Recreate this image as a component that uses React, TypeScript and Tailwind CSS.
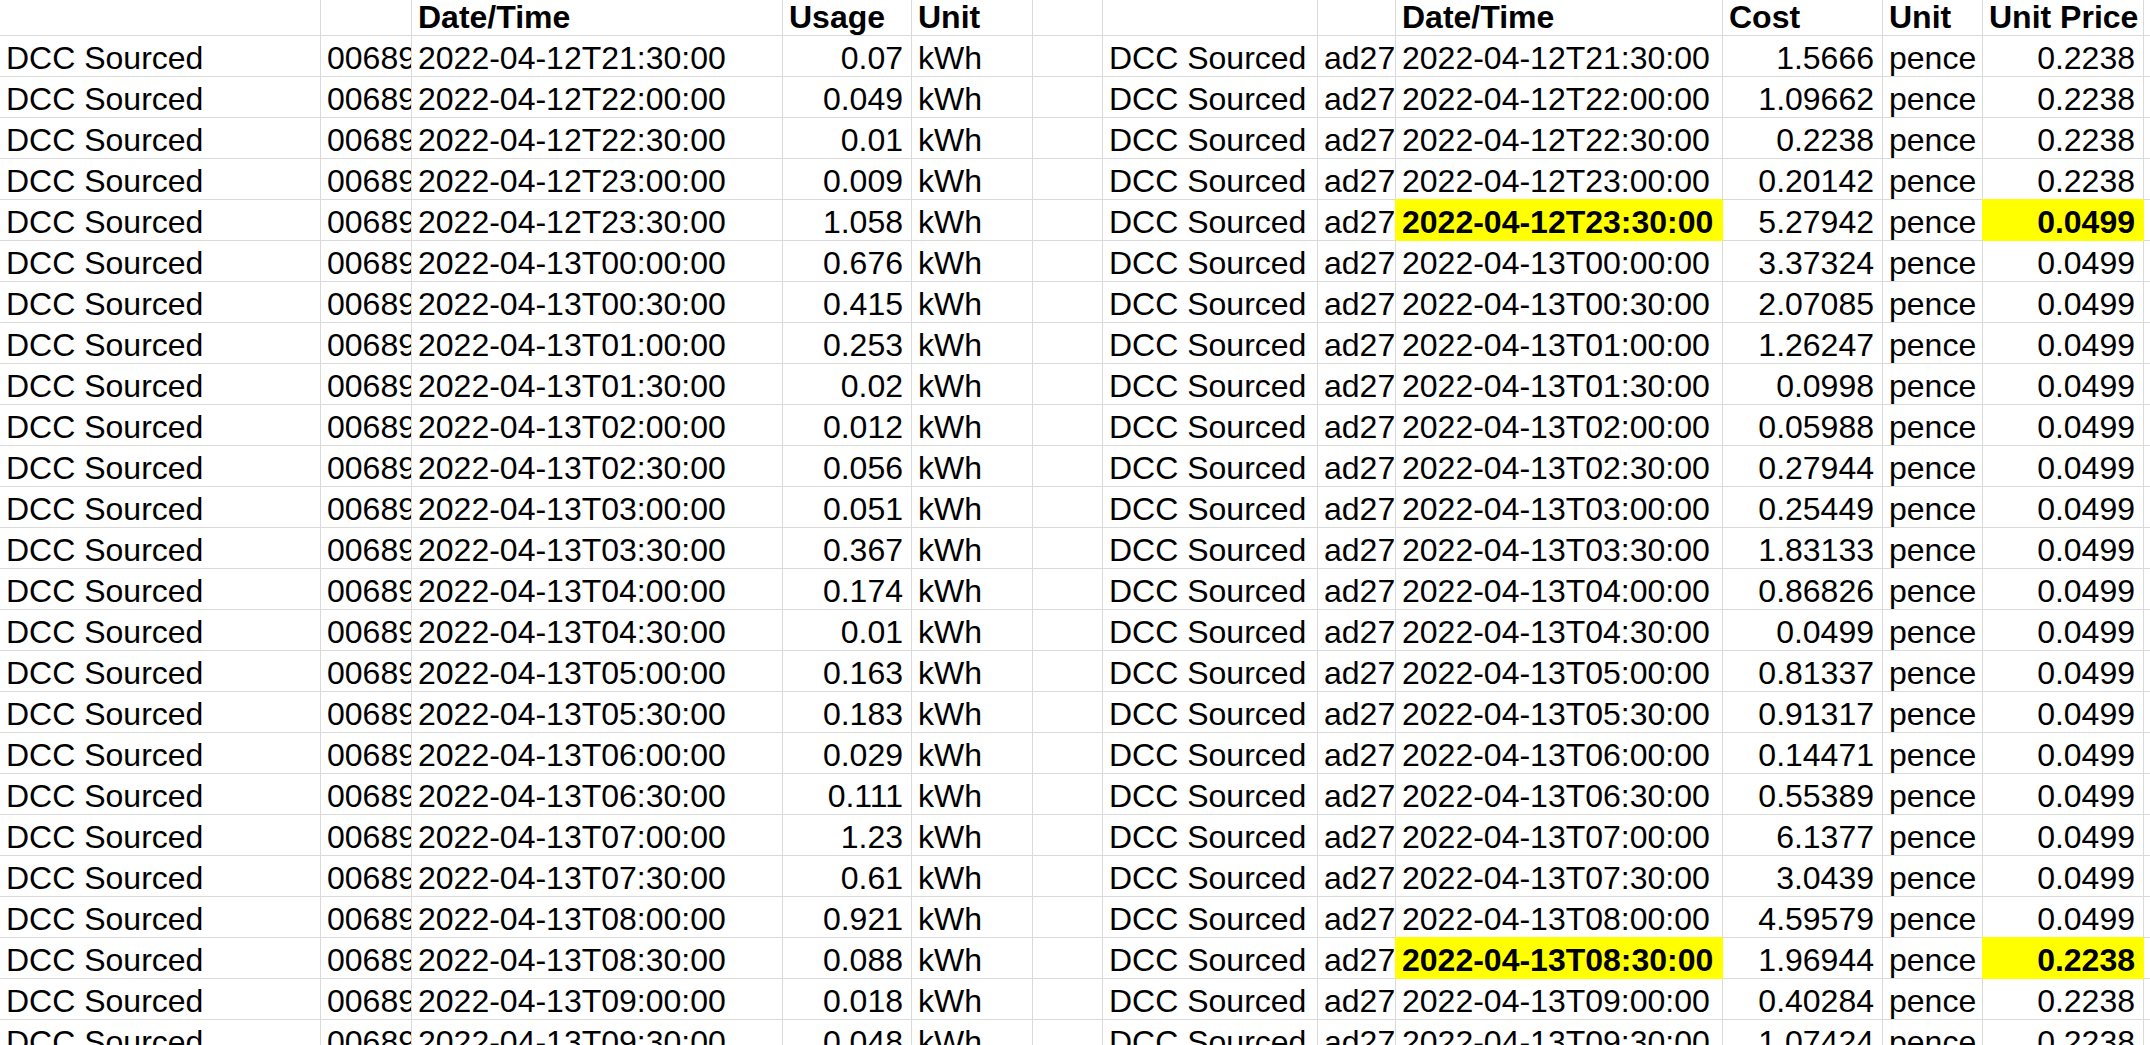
import React from "react";

type Row = { t: string; usage: string; cost: string; price: string; hl?: boolean };

const rows: Row[] = [
  { t: "2022-04-12T21:30:00", usage: "0.07", cost: "1.5666", price: "0.2238" },
  { t: "2022-04-12T22:00:00", usage: "0.049", cost: "1.09662", price: "0.2238" },
  { t: "2022-04-12T22:30:00", usage: "0.01", cost: "0.2238", price: "0.2238" },
  { t: "2022-04-12T23:00:00", usage: "0.009", cost: "0.20142", price: "0.2238" },
  { t: "2022-04-12T23:30:00", usage: "1.058", cost: "5.27942", price: "0.0499", hl: true },
  { t: "2022-04-13T00:00:00", usage: "0.676", cost: "3.37324", price: "0.0499" },
  { t: "2022-04-13T00:30:00", usage: "0.415", cost: "2.07085", price: "0.0499" },
  { t: "2022-04-13T01:00:00", usage: "0.253", cost: "1.26247", price: "0.0499" },
  { t: "2022-04-13T01:30:00", usage: "0.02", cost: "0.0998", price: "0.0499" },
  { t: "2022-04-13T02:00:00", usage: "0.012", cost: "0.05988", price: "0.0499" },
  { t: "2022-04-13T02:30:00", usage: "0.056", cost: "0.27944", price: "0.0499" },
  { t: "2022-04-13T03:00:00", usage: "0.051", cost: "0.25449", price: "0.0499" },
  { t: "2022-04-13T03:30:00", usage: "0.367", cost: "1.83133", price: "0.0499" },
  { t: "2022-04-13T04:00:00", usage: "0.174", cost: "0.86826", price: "0.0499" },
  { t: "2022-04-13T04:30:00", usage: "0.01", cost: "0.0499", price: "0.0499" },
  { t: "2022-04-13T05:00:00", usage: "0.163", cost: "0.81337", price: "0.0499" },
  { t: "2022-04-13T05:30:00", usage: "0.183", cost: "0.91317", price: "0.0499" },
  { t: "2022-04-13T06:00:00", usage: "0.029", cost: "0.14471", price: "0.0499" },
  { t: "2022-04-13T06:30:00", usage: "0.111", cost: "0.55389", price: "0.0499" },
  { t: "2022-04-13T07:00:00", usage: "1.23", cost: "6.1377", price: "0.0499" },
  { t: "2022-04-13T07:30:00", usage: "0.61", cost: "3.0439", price: "0.0499" },
  { t: "2022-04-13T08:00:00", usage: "0.921", cost: "4.59579", price: "0.0499" },
  { t: "2022-04-13T08:30:00", usage: "0.088", cost: "1.96944", price: "0.2238", hl: true },
  { t: "2022-04-13T09:00:00", usage: "0.018", cost: "0.40284", price: "0.2238" },
  { t: "2022-04-13T09:30:00", usage: "0.048", cost: "1.07424", price: "0.2238" },
];

const base =
  "h-[41px] border-r border-b border-[#dadada] overflow-x-clip overflow-y-visible whitespace-nowrap leading-[44px]";
const L = `${base} pl-[6px]`;
const R = `${base} pr-[8px] text-right`;
const HL = "bg-[#ffff00] border-[#ffff00] font-bold shadow-[-1px_-1px_0_0_#ffff00]";

export default function App() {
  return (
    <div className="w-[2150px] h-[1045px] overflow-hidden bg-white text-black font-['Liberation_Sans',Arial,sans-serif] text-[32px]">
      <div className="-mt-[5px] grid grid-cols-[321px_91px_371px_129px_121px_70px_215px_78px_327px_160px_100px_161px_1fr]">
        {/* header */}
        <div className={L}></div>
        <div className={L}></div>
        <div className={`${L} font-bold`}>Date/Time</div>
        <div className={`${L} font-bold`}>Usage</div>
        <div className={`${L} font-bold`}>Unit</div>
        <div className={L}></div>
        <div className={L}></div>
        <div className={L}></div>
        <div className={`${L} font-bold`}>Date/Time</div>
        <div className={`${L} font-bold`}>Cost</div>
        <div className={`${L} font-bold`}>Unit</div>
        <div className={`${L} font-bold`}>Unit Price</div>
        <div className={L}></div>
        {rows.map((r, i) => (
          <React.Fragment key={i}>
            <div className={L}>DCC Sourced</div>
            <div className={L}>0068912734</div>
            <div className={L}>{r.t}</div>
            <div className={R}>{r.usage}</div>
            <div className={L}>kWh</div>
            <div className={L}></div>
            <div className={L}>DCC Sourced</div>
            <div className={L}>ad27</div>
            <div className={r.hl ? `${L} ${HL}` : L}>{r.t}</div>
            <div className={R}>{r.cost}</div>
            <div className={L}>pence</div>
            <div className={r.hl ? `${R} ${HL}` : R}>{r.price}</div>
            <div className={L}></div>
          </React.Fragment>
        ))}
      </div>
    </div>
  );
}
